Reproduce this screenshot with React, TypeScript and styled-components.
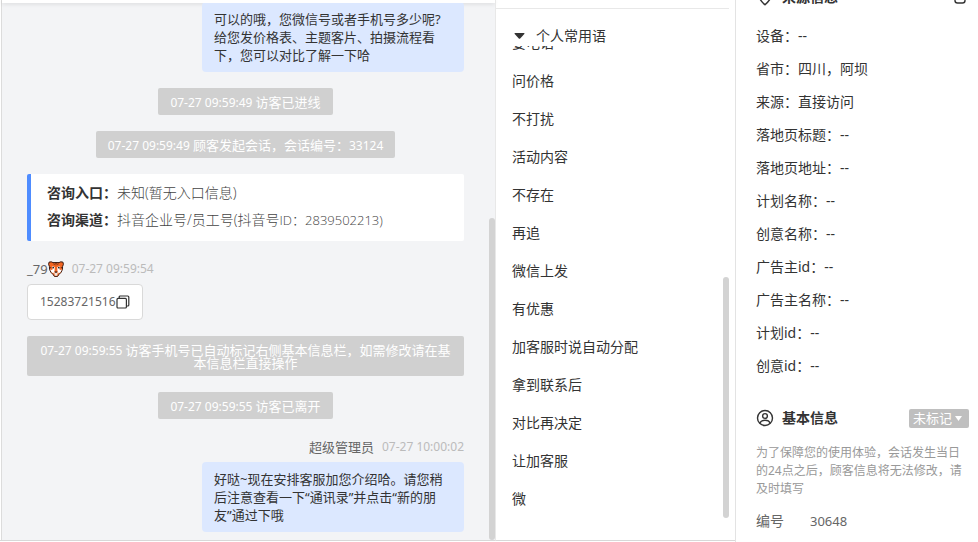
import React from 'react';
import styled, { createGlobalStyle } from 'styled-components';

const GlobalStyle = createGlobalStyle`
  * { box-sizing: border-box; }
  body {
    margin: 0;
    background: #fff;
    color: #333;
    font-family: 'Noto Sans', 'Noto Sans CJK SC', sans-serif;
    font-size: 14px;
  }
  button, select { font: inherit; color: inherit; }
`;

const Page = styled.div`
  display: grid;
  grid-template-columns: minmax(0, 1fr) 240px 243px;
  height: 100vh;
  overflow: hidden;
`;

/* ---------- conversation ---------- */

const ChatFrame = styled.main`
  display: flex;
  min-height: 0;
  margin-bottom: 1px;
  border-bottom: 1px solid #d8d8d8;
`;

const EdgeRail = styled.div`
  width: 2px;
  border-right: 1px solid #dcdcdc;
`;

const ChatColumn = styled.div`
  flex: 1;
  min-width: 0;
  display: flex;
  flex-direction: column;
  background: #f3f4f6;
`;

const ChatTop = styled.div`
  flex: none;
  height: 3px;
  background: #fff;
  box-shadow: 0 1px 4px rgba(0, 0, 0, 0.12);
`;

const ChatBody = styled.div`
  flex: 1;
  min-height: 0;
  display: flex;
`;

const Messages = styled.div`
  flex: 1;
  min-width: 0;
  display: flex;
  flex-direction: column;
  justify-content: flex-end;
  gap: 16px;
  padding: 0 25px 8px;
  overflow: hidden;
  font-size: 13px;
`;

const Track = styled.div`
  flex: none;
  width: 6px;
  display: flex;
  flex-direction: column;
  justify-content: flex-end;
`;

const Thumb = styled.div<{ $size: string }>`
  height: ${(p) => p.$size};
  border-radius: 3px;
  background: #d3d3d3;
`;

const Latin = styled.span`
  font-size: 12px;
`;

const Notice = styled.div`
  align-self: center;
  padding: 8px 12px 6px;
  border-radius: 2px;
  background: #d0d0d0;
  color: #fff;
  line-height: 13px;
  text-align: center;
`;

const EntryCard = styled.dl`
  margin: 0;
  padding: 5px 16px 7px;
  border-left: 4px solid #4e8cff;
  border-radius: 2px;
  background: #fff;
  font-size: 14px;
  line-height: 27px;
`;

const EntryRow = styled.div`
  display: flex;
`;

const EntryLabel = styled.dt`
  font-weight: 700;
`;

const EntryValue = styled.dd`
  margin: 0;
  color: #444;
  font-family: 'Open Sans', 'Noto Sans CJK SC', sans-serif;
  font-weight: 300;
`;

const EntryId = styled.span`
  font-size: 13px;
`;

const Message = styled.article<{ $mine?: boolean }>`
  display: flex;
  flex-direction: column;
  align-items: ${(p) => (p.$mine ? 'flex-end' : 'flex-start')};
  gap: 5px;
`;

const MessageHead = styled.header`
  display: flex;
  align-items: center;
  gap: 8px;
  padding-top: 2px;
  line-height: 20px;
  color: #666;
`;

const Author = styled.span`
  display: flex;
  align-items: center;
`;

const Stamp = styled.time`
  color: #bbb;
  font-size: 12px;
`;

const Bubble = styled.div<{ $mine?: boolean }>`
  display: flex;
  align-items: center;
  max-width: 262px;
  width: ${(p) => (p.$mine ? '262px' : 'auto')};
  padding: 8px 12px;
  border: ${(p) => (p.$mine ? 'none' : '1px solid #d9d9d9')};
  border-radius: 4px;
  background: ${(p) => (p.$mine ? '#dce8ff' : '#fff')};
  color: ${(p) => (p.$mine ? '#333' : '#666')};
  line-height: 18px;
  white-space: pre-line;
`;

const IconButton = styled.button`
  display: flex;
  padding: 0;
  border: 0;
  background: none;
  color: #333;
  cursor: pointer;
`;

/* ---------- phrases ---------- */

const PhrasePanel = styled.aside`
  display: flex;
  flex-direction: column;
  min-height: 0;
  margin-bottom: 1px;
  padding: 8px 6px 22px 0;
  border-left: 1px solid #e8e8e8;
  border-bottom: 1px solid #d8d8d8;
`;

const PhraseToggle = styled.button`
  flex: none;
  display: flex;
  align-items: center;
  gap: 11px;
  padding: 17px 18px 0;
  border: 0;
  border-top: 1px solid #e8e8e8;
  background: none;
  line-height: 20px;
  text-align: left;
  cursor: pointer;
`;

const PhraseBody = styled.div`
  flex: 1;
  min-height: 0;
  display: flex;
`;

const PhraseList = styled.ul`
  flex: 1;
  display: flex;
  flex-direction: column;
  justify-content: flex-end;
  margin: 0;
  padding: 0 16px;
  overflow: hidden;
  list-style: none;
`;

const Phrase = styled.button`
  display: block;
  width: 100%;
  padding: 0;
  border: 0;
  background: none;
  line-height: 38px;
  text-align: left;
  cursor: pointer;
`;

/* ---------- visitor details ---------- */

const InfoPanel = styled.aside`
  display: flex;
  flex-direction: column;
  min-height: 0;
  overflow: hidden;
  padding: 0 9px 0 20px;
  border-left: 1px solid #e3e3e3;
`;

const InfoScroll = styled.div`
  margin-top: -14px;
`;

const InfoHead = styled.div`
  display: flex;
  align-items: center;
  justify-content: space-between;
  height: 22px;
`;

const InfoTitle = styled.h2`
  display: flex;
  align-items: center;
  gap: 8px;
  margin: 0;
  font-size: 14px;
  font-weight: 700;
  line-height: 22px;
`;

const SourceActions = styled.div`
  padding-right: 2px;
`;

const InfoList = styled.dl`
  margin: 11px 0 25px;
  line-height: 33px;
`;

const InfoRow = styled.div`
  display: flex;
`;

const Term = styled.dt``;

const Detail = styled.dd`
  margin: 0;
`;

const MarkBox = styled.label`
  position: relative;
  display: flex;
  align-items: center;
  color: #fff;
`;

const MarkSelect = styled.select`
  appearance: none;
  width: 60px;
  height: 19px;
  padding: 0 4px;
  border: 0;
  border-radius: 2px;
  background: #bfbfbf;
  font-size: 13px;
  line-height: 19px;
`;

const MarkCaret = styled.svg`
  position: absolute;
  right: 7px;
  pointer-events: none;
`;

const Hint = styled.p`
  margin: 15px 0 12px;
  color: #999;
  font-size: 12px;
  line-height: 18px;
`;

const IdRow = styled.dl`
  display: grid;
  grid-template-columns: 54px 1fr;
  margin: 0;
  color: #666;
  line-height: 22px;
`;

const IdValue = styled.dd`
  margin: 0;
  font-size: 13px;
`;

/* ---------- drawings ---------- */

const Tiger = () => (
  <svg width="16" height="16" viewBox="0 0 16 16" aria-label="老虎" role="img">
    <path d="M1 1.2 3.2.8 5 1.600h6L12.800.8l2.200.4.4 2.200-.8 2-.2 3.200-1.400 2.800L11 13.400l-1.400 2H6.400l-1.400-2-2-2L1.600 8.600 1.400 5.400l-.8-2z" fill="#f26522" stroke="#3a1a10" strokeWidth="1" />
    <path d="M2.200 8.600 4 9l2-3h.8l-.3 4.500L5.200 12.400l-2-1.700zM13.800 8.600 12 9l-2-3h-.8l.3 4.500 1.300 1.900 2-1.700z" fill="#fff" />
    <path d="M6.200 11.200h3.600L9.200 14.800H6.800z" fill="#f5e6dc" />
    <path d="M6.400 10.400h3.200L8 12.200zM7.400 1.600h1.200L8 5zM5 2.400l2 .5-.8.8zM11 2.400l-2 .5.800.8zM1.600 6.200l2 .3-1.500.8zM14.400 6.200l-2 .3 1.500.8z" fill="#2b1510" />
    <path d="M3.800 5.600h2.400L5.600 7.400H4.400zM12.200 5.600H9.800l.6 1.800h1.200z" fill="#fff" />
    <circle cx="5.200" cy="6.600" r=".9" fill="#222" />
    <circle cx="10.800" cy="6.600" r=".9" fill="#222" />
  </svg>
);

const CopyIcon = () => (
  <svg width="14" height="14" viewBox="0 0 14 14" fill="none" stroke="currentColor" strokeWidth="1.2">
    <rect x="1" y="3.4" width="9.4" height="9.6" rx="1" />
    <path d="M3.2 3.2V2a1 1 0 0 1 1-1h7.6a1 1 0 0 1 1 1v8a1 1 0 0 1-1 1h-1.2" />
  </svg>
);

const PinIcon = () => (
  <svg width="18" height="18" viewBox="0 0 18 18" fill="none" stroke="#333" strokeWidth="1.5">
    <path d="M9 16.8C5.4 13.6 3 10.8 3 7.6a6 6 0 0 1 12 0c0 3.2-2.4 6-6 9.2z" />
    <circle cx="9" cy="7.5" r="2" />
  </svg>
);

const PersonIcon = () => (
  <svg width="18" height="18" viewBox="0 0 18 18" fill="none" stroke="#333" strokeWidth="1.4">
    <circle cx="9" cy="9" r="7.5" />
    <circle cx="9" cy="7" r="2.4" />
    <path d="M3.8 14.2c.8-2 2.8-2.9 5.2-2.9s4.400.9 5.200 2.900" />
  </svg>
);

const BoxIcon = () => (
  <svg width="14" height="14" viewBox="0 0 14 14" fill="none" stroke="#333" strokeWidth="1.4">
    <rect x="2" y="1" width="10" height="12" rx="2.5" />
  </svg>
);

const phrases = [
  '要电话', '问价格', '不打扰', '活动内容', '不存在', '再追', '微信上发',
  '有优惠', '加客服时说自动分配', '拿到联系后', '对比再决定', '让加客服', '微',
];

const source: [string, string][] = [
  ['设备', '--'],
  ['省市', '四川，阿坝'],
  ['来源', '直接访问'],
  ['落地页标题', '--'],
  ['落地页地址', '--'],
  ['计划名称', '--'],
  ['创意名称', '--'],
  ['广告主id', '--'],
  ['广告主名称', '--'],
  ['计划id', '--'],
  ['创意id', '--'],
];

export default function App() {
  return (
    <>
      <GlobalStyle />
      <Page>
        <ChatFrame>
          <EdgeRail />
          <ChatColumn>
            <ChatTop />
            <ChatBody>
              <Messages>
                <Message $mine>
                  <Bubble $mine>
                    {'可以的哦，您微信号或者手机号多少呢?\n给您发价格表、主题客片、拍摄流程看\n下，您可以对比了解一下哈'}
                  </Bubble>
                </Message>
                <Notice><Latin>07-27 09:59:49 </Latin>访客已进线</Notice>
                <Notice>
                  <Latin>07-27 09:59:49 </Latin>顾客发起会话，会话编号：<Latin>33124</Latin>
                </Notice>
                <EntryCard>
                  <EntryRow>
                    <EntryLabel>咨询入口：</EntryLabel>
                    <EntryValue>未知(暂无入口信息)</EntryValue>
                  </EntryRow>
                  <EntryRow>
                    <EntryLabel>咨询渠道：</EntryLabel>
                    <EntryValue>
                      抖音企业号/员工号(抖音号<EntryId>ID：2839502213)</EntryId>
                    </EntryValue>
                  </EntryRow>
                </EntryCard>
                <Message>
                  <MessageHead>
                    <Author>_79<Tiger /></Author>
                    <Stamp>07-27 09:59:54</Stamp>
                  </MessageHead>
                  <Bubble>
                    <Latin>15283721516</Latin>
                    <IconButton aria-label="复制"><CopyIcon /></IconButton>
                  </Bubble>
                </Message>
                <Notice>
                  <Latin>07-27 09:59:55 </Latin>访客手机号已自动标记右侧基本信息栏，如需修改请在基本信息栏直接操作
                </Notice>
                <Notice><Latin>07-27 09:59:55 </Latin>访客已离开</Notice>
                <Message $mine>
                  <MessageHead>
                    <Author>超级管理员</Author>
                    <Stamp>07-27 10:00:02</Stamp>
                  </MessageHead>
                  <Bubble $mine>
                    {'好哒~现在安排客服加您介绍哈。请您稍\n后注意查看一下“通讯录”并点击“新的朋\n友”通过下哦'}
                  </Bubble>
                </Message>
              </Messages>
              <Track><Thumb $size="60%" /></Track>
            </ChatBody>
          </ChatColumn>
        </ChatFrame>

        <PhrasePanel>
          <PhraseToggle aria-expanded="true">
            <svg width="11" height="6" viewBox="0 0 11 6" fill="#333">
              <path d="M1 0h9q.8.2.3 1L6.2 5.5q-.7.6-1.4 0L.7 1Q.2.2 1 0z" />
            </svg>
            个人常用语
          </PhraseToggle>
          <PhraseBody>
            <PhraseList>
              {phrases.map((p) => (
                <li key={p}><Phrase>{p}</Phrase></li>
              ))}
            </PhraseList>
            <Track><Thumb $size="51%" /></Track>
          </PhraseBody>
        </PhrasePanel>

        <InfoPanel>
          <InfoScroll>
            <InfoHead>
              <InfoTitle><PinIcon />来源信息</InfoTitle>
              <SourceActions>
                <IconButton aria-label="复制来源信息"><BoxIcon /></IconButton>
              </SourceActions>
            </InfoHead>
            <InfoList>
              {source.map(([k, v]) => (
                <InfoRow key={k}>
                  <Term>{k}：</Term>
                  <Detail>{v}</Detail>
                </InfoRow>
              ))}
            </InfoList>
            <InfoHead>
              <InfoTitle><PersonIcon />基本信息</InfoTitle>
              <MarkBox>
                <MarkSelect aria-label="标记状态">
                  <option>未标记</option>
                </MarkSelect>
                <MarkCaret width="7" height="5" viewBox="0 0 7 5" fill="#fff">
                  <path d="M0 0h7L3.5 5z" />
                </MarkCaret>
              </MarkBox>
            </InfoHead>
            <Hint>为了保障您的使用体验，会话发生当日的24点之后，顾客信息将无法修改，请及时填写</Hint>
            <IdRow>
              <Term>编号</Term>
              <IdValue>30648</IdValue>
            </IdRow>
          </InfoScroll>
        </InfoPanel>
      </Page>
    </>
  );
}
